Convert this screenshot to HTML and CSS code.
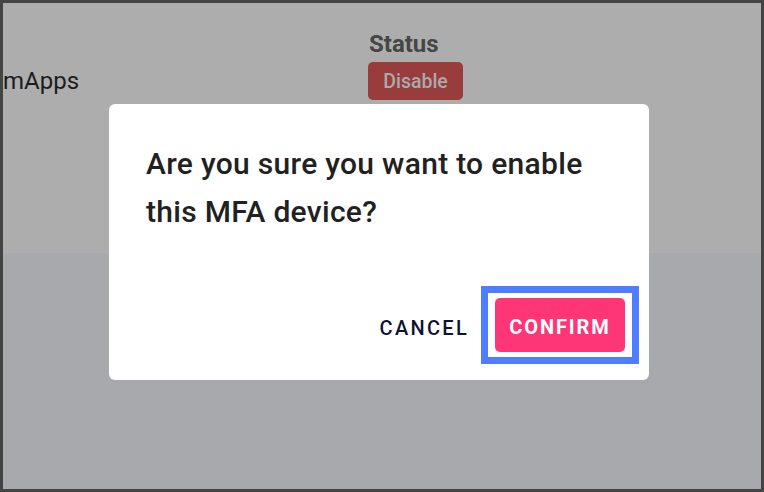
FILE: index.html
```html
<!DOCTYPE html>
<html>
<head>
<meta charset="utf-8">
<link rel="stylesheet" href="styles.css">
</head>
<body>
<div class="frame">
  <div class="page">
    <div class="top">
      <div class="row">
        <div class="cell-name">mApps</div>
        <div class="cell-status">
          <div class="status-label">Status</div>
          <button class="btn-disable">Disable</button>
        </div>
      </div>
    </div>
    <div class="bottom"></div>
  </div>
  <div class="modal">
    <p class="modal-text">Are you sure you want to enable this MFA device?</p>
    <div class="modal-actions">
      <button class="btn-cancel">CANCEL</button>
      <span class="focus-ring"><button class="btn-confirm">CONFIRM</button></span>
    </div>
  </div>
</div>
</body>
</html>
```

FILE: styles.css
```css
* { box-sizing: border-box; }
html, body { margin: 0; padding: 0; }
body { font-family: Roboto, "Liberation Sans", sans-serif; }
.frame {
  position: relative;
  width: 764px;
  height: 492px;
  border: 3px solid #444444;
  overflow: hidden;
}
.page {
  display: flex;
  flex-direction: column;
  height: 100%;
}
.top {
  height: 250px;
  background: #adadad;
}
.bottom {
  flex: 1;
  background: #a8a9ac;
}
.row {
  display: flex;
  align-items: flex-start;
  padding-top: 27px;
}
.cell-name {
  width: 365px;
  margin-top: 37px;
  font-size: 24px;
  line-height: 28px;
  color: #1c1c1c;
}
.status-label {
  font-size: 24px;
  line-height: 28px;
  font-weight: 700;
  color: #464646;
  margin-left: 1px;
}
.btn-disable {
  display: block;
  margin-top: 4px;
  width: 95px;
  height: 38px;
  border: none;
  border-radius: 5px;
  background: #983c3c;
  color: #ababab;
  font-family: Roboto, sans-serif;
  font-size: 19.5px;
  font-weight: 500;
  padding: 0;
}
.modal {
  position: absolute;
  left: 106px;
  top: 101px;
  width: 540px;
  height: 276px;
  background: #ffffff;
  border-radius: 6px;
  padding: 36px 10px 16px 37px;
  display: flex;
  flex-direction: column;
}
.modal-text {
  margin: 0 30px 0 0;
  font-size: 30px;
  font-weight: 500;
  line-height: 48px;
  letter-spacing: 0.3px;
  color: #212121;
  flex: 1;
}
.modal-actions {
  display: flex;
  justify-content: flex-end;
  align-items: center;
  gap: 12px;
}
.btn-cancel, .btn-confirm {
  font-family: Roboto, sans-serif;
  font-size: 20px;
  border: none;
  padding: 0;
  cursor: pointer;
}
.btn-cancel {
  background: none;
  color: #0e1332;
  font-weight: 500;
  letter-spacing: 2.3px;
  margin-top: 5px;
}
.focus-ring {
  display: flex;
  border: 7px solid #4f7dff;
  padding: 5px 7px;
  background: #ffffff;
}
.btn-confirm {
  width: 130px;
  height: 54px;
  padding-top: 3px;
  background: #fe3577;
  color: #ffffff;
  border-radius: 5px;
  font-weight: 700;
  letter-spacing: 1.9px;
  outline: none;
}
```
